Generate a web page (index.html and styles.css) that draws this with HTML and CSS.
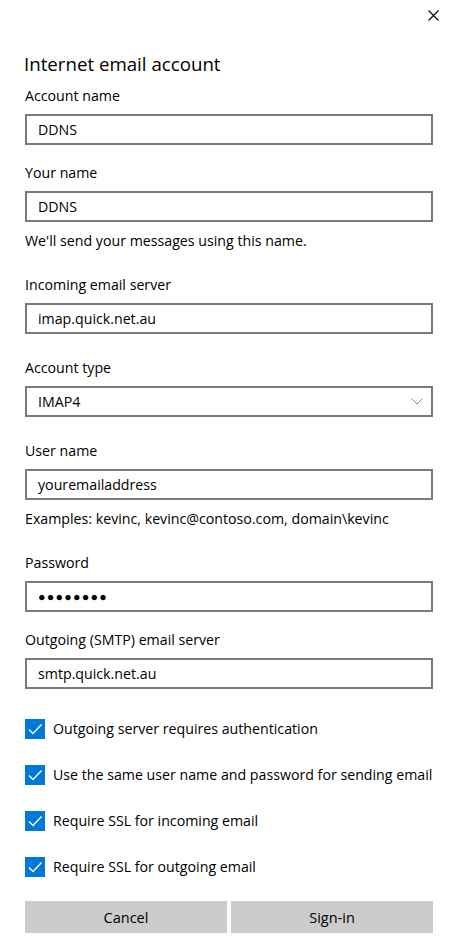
FILE: index.html
```html
<!DOCTYPE html>
<html lang="en">
<head>
    <meta charset="UTF-8">
    <meta name="viewport" content="width=device-width, initial-scale=1.0">
    <title>Internet email account</title>
    <link rel="stylesheet" href="styles.css">
</head>
<body>

    <div class="topbar">
        <svg class="close" width="11" height="11" viewBox="0 0 11 11">
            <path d="M0.5 0.5 L10.5 10.5 M10.5 0.5 L0.5 10.5" stroke="#000" stroke-width="1.1" fill="none"/>
        </svg>
    </div>

    <h1>Internet email account</h1>

    <!-- Account -->
    <div class="field first">
        <label>Account name</label>
        <div class="box">DDNS</div>
    </div>

    <div class="field">
        <label>Your name</label>
        <div class="box">DDNS</div>
        <p class="hint">We'll send your messages using this name.</p>
    </div>

    <!-- Servers -->
    <div class="field spaced">
        <label>Incoming email server</label>
        <div class="box">imap.quick.net.au</div>
    </div>

    <div class="field spaced">
        <label>Account type</label>
        <div class="box select">
            <span>IMAP4</span>
            <svg width="12" height="7" viewBox="0 0 12 7">
                <path d="M0.5 0.5 L6 6 L11.5 0.5" stroke="#8a8a8a" stroke-width="1" fill="none"/>
            </svg>
        </div>
    </div>

    <div class="field spaced">
        <label>User name</label>
        <div class="box">youremailaddress</div>
        <p class="hint">Examples: kevinc, kevinc@contoso.com, domain\kevinc</p>
    </div>

    <div class="field spaced">
        <label>Password</label>
        <div class="box password">●●●●●●●●</div>
    </div>

    <div class="field">
        <label>Outgoing (SMTP) email server</label>
        <div class="box">smtp.quick.net.au</div>
    </div>

    <!-- Options -->
    <div class="checks">
        <div class="check">
            <span class="tick"><svg width="20" height="20" viewBox="0 0 20 20"><path d="M4 10.5 L8 14.5 L16.5 5.5" stroke="#fff" stroke-width="1.4" fill="none"/></svg></span>
            Outgoing server requires authentication
        </div>
        <div class="check">
            <span class="tick"><svg width="20" height="20" viewBox="0 0 20 20"><path d="M4 10.5 L8 14.5 L16.5 5.5" stroke="#fff" stroke-width="1.4" fill="none"/></svg></span>
            Use the same user name and password for sending email
        </div>
        <div class="check">
            <span class="tick"><svg width="20" height="20" viewBox="0 0 20 20"><path d="M4 10.5 L8 14.5 L16.5 5.5" stroke="#fff" stroke-width="1.4" fill="none"/></svg></span>
            Require SSL for incoming email
        </div>
        <div class="check">
            <span class="tick"><svg width="20" height="20" viewBox="0 0 20 20"><path d="M4 10.5 L8 14.5 L16.5 5.5" stroke="#fff" stroke-width="1.4" fill="none"/></svg></span>
            Require SSL for outgoing email
        </div>
    </div>

    <div class="buttons">
        <button>Cancel</button>
        <button>Sign-in</button>
    </div>

</body>
</html>
```

FILE: styles.css
```css
/* General */
body {
    margin: 0;
    padding: 0 25px;
    background: #fff;
    color: #000;
    font-family: "Open Sans", "Liberation Sans", sans-serif;
    font-size: 14.2px;
    line-height: 20px;
}

.topbar {
    height: 50px;
    display: flex;
    justify-content: flex-end;
    align-items: flex-start;
    margin-right: -6px;
}

.close {
    margin-top: 10px;
}

h1 {
    margin: 0;
    font-size: 18.7px;
    font-weight: normal;
    line-height: 28px;
    margin-left: -1px;
}

/* Fields */
.field {
    margin-top: 18px;
}

.field.first {
    margin-top: 8px;
}

.field.spaced {
    margin-top: 24px;
}

label {
    display: block;
    margin-bottom: 8px;
}

.box {
    height: 27px;
    border: 2px solid #7a7a7a;
    padding: 0 11px;
    display: flex;
    align-items: center;
}

.select {
    justify-content: space-between;
    padding-right: 8px;
}

.password {
    font-size: 12.5px;
    letter-spacing: 1.2px;
}

.hint {
    margin: 9px 0 0;
}

/* Checkboxes */
.checks {
    margin-top: 30px;
    display: flex;
    flex-direction: column;
    gap: 26px;
}

.check {
    display: flex;
    align-items: center;
    gap: 8px;
}

.tick {
    width: 20px;
    height: 20px;
    background: #0078d7;
    flex-shrink: 0;
}

.tick svg {
    display: block;
}

/* Buttons */
.buttons {
    margin-top: 24px;
    display: flex;
    gap: 4px;
}

.buttons button {
    flex: 1;
    height: 32px;
    border: none;
    background: #cccccc;
    font-family: inherit;
    font-size: 14.5px;
    color: #000;
}
```
